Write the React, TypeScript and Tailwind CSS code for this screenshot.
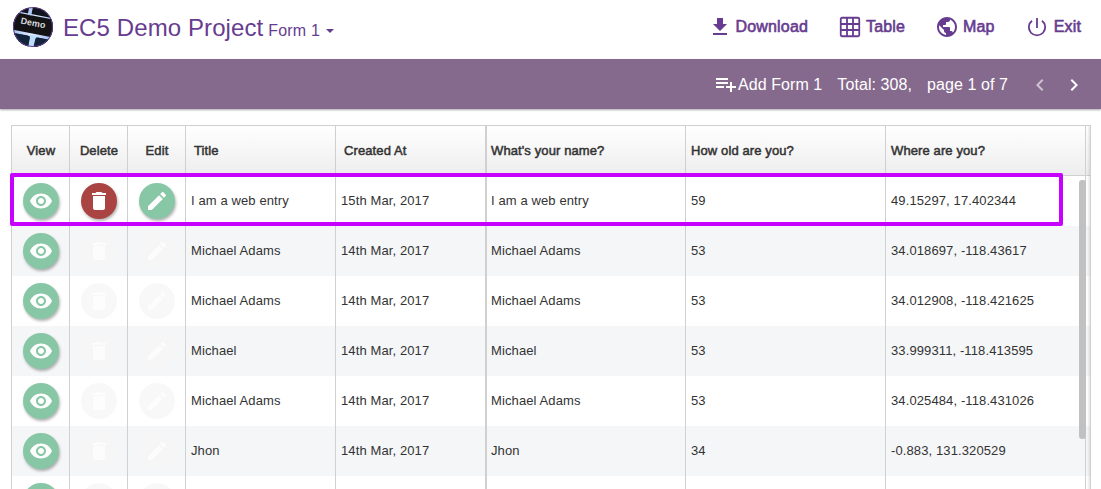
import React from 'react';

const PATHS = {
  download: 'M19 9h-4V3H9v6H5l7 7 7-7zM5 18v2h14v-2H5z',
  globe:
    'M12 2C6.48 2 2 6.48 2 12s4.48 10 10 10 10-4.48 10-10S17.52 2 12 2zm-1 17.93c-3.95-.49-7-3.85-7-7.93 0-.62.08-1.21.21-1.79L9 15v1c0 1.1.9 2 2 2v1.93zm6.9-2.54c-.26-.81-1-1.39-1.9-1.39h-1v-3c0-.55-.45-1-1-1H8v-2h2c.55 0 1-.45 1-1V7h2c1.1 0 2-.9 2-2v-.41c2.93 1.19 5 4.06 5 7.41 0 2.08-.8 3.97-2.1 5.39z',
  add: 'M14 10H2v2h12v-2zm0-4H2v2h12V6zm4 8v-4h-2v4h-4v2h4v4h2v-4h4v-2h-4zM2 16h8v-2H2v2z',
  prev: 'M15.41 7.41L14 6l-6 6 6 6 1.41-1.41L10.83 12z',
  next: 'M10 6L8.59 7.41 13.17 12l-4.58 4.59L10 18l6-6z',
  eye: 'M12 4.5C7 4.5 2.73 7.61 1 12c1.73 4.39 6 7.5 11 7.5s9.27-3.11 11-7.5c-1.73-4.39-6-7.5-11-7.5zM12 17c-2.76 0-5-2.24-5-5s2.24-5 5-5 5 2.24 5 5-2.24 5-5 5zm0-8c-1.66 0-3 1.34-3 3s1.34 3 3 3 3-1.34 3-3-1.34-3-3-3z',
  trash: 'M6 19c0 1.1.9 2 2 2h8c1.1 0 2-.9 2-2V7H6v12zM19 4h-3.5l-1-1h-5l-1 1H5v2h14V4z',
  pencil:
    'M3 17.25V21h3.75L17.81 9.94l-3.75-3.75L3 17.25zM20.71 7.04c.39-.39.39-1.02 0-1.41l-2.34-2.34c-.39-.39-1.02-.39-1.41 0l-1.83 1.83 3.75 3.75 1.83-1.83z',
};

const STROKES = {
  grid: 'M4 2.75h16a1.25 1.25 0 0 1 1.25 1.25v16a1.25 1.25 0 0 1-1.25 1.25H4a1.25 1.25 0 0 1-1.25-1.25V4A1.25 1.25 0 0 1 4 2.75zM9 3v18M15 3v18M3 9h18M3 15h18',
  power: 'M12 3v10M7 5.7a8.2 8.2 0 1 0 10 0',
};

type IconName = keyof typeof PATHS | keyof typeof STROKES;

function Icon({ name, className = 'size-6' }: { name: IconName; className?: string }) {
  return (
    <svg viewBox="0 0 24 24" className={`shrink-0 ${className}`}>
      {name in STROKES ? (
        <path d={STROKES[name as keyof typeof STROKES]} fill="none" stroke="currentColor" strokeWidth="1.8" />
      ) : (
        <path d={PATHS[name as keyof typeof PATHS]} fill="currentColor" />
      )}
    </svg>
  );
}

function Logo() {
  return (
    <div className="relative size-10 overflow-hidden rounded-full">
      <svg viewBox="0 0 40 40" className="size-10">
        <defs>
          <linearGradient id="glow" x1="0" y1="0" x2="1" y2="0">
            <stop offset="0" stopColor="#8fb4f2" />
            <stop offset="0.5" stopColor="#e2edff" />
            <stop offset="1" stopColor="#86aaf0" />
          </linearGradient>
        </defs>
        <rect width="40" height="40" fill="#10131d" />
        <g transform="rotate(11 20 20)">
          <rect x="-6" y="7.6" width="52" height="22" fill="url(#glow)" />
          <rect x="-2" y="8.8" width="46" height="17.6" rx="2" fill="#131316" />
          <rect x="12.5" y="-4" width="3.6" height="13" fill="#b3caf8" />
          <path d="M18.5 28h7l-1.5 14h-5z" fill="#bcdcfb" />
          <rect x="-6" y="29.4" width="25" height="12" rx="2.5" fill="#14233c" />
          <rect x="24.5" y="29.4" width="25" height="12" rx="2.5" fill="#14233c" />
        </g>
      </svg>
      <span className="absolute inset-x-0 top-[9px] rotate-[11deg] text-center text-[9px] leading-[15px] font-bold text-[#d4d5d9]">
        Demo
      </span>
      <span className="absolute inset-0 rounded-full border border-[#673c90]" />
    </div>
  );
}

const COLUMNS = 'grid grid-cols-[58px_58px_58px_150px_150px_200px_200px_200px_5px]';
const HEADINGS = ['View', 'Delete', 'Edit', 'Title', 'Created At', "What's your name?", 'How old are you?', 'Where are you?'];

const ENTRIES = [
  { name: 'I am a web entry', date: '15th Mar, 2017', age: '59', place: '49.15297, 17.402344', own: true },
  { name: 'Michael Adams', date: '14th Mar, 2017', age: '53', place: '34.018697, -118.43617' },
  { name: 'Michael Adams', date: '14th Mar, 2017', age: '53', place: '34.012908, -118.421625' },
  { name: 'Michael', date: '14th Mar, 2017', age: '53', place: '33.999311, -118.413595' },
  { name: 'Michael Adams', date: '14th Mar, 2017', age: '53', place: '34.025484, -118.431026' },
  { name: 'Jhon', date: '14th Mar, 2017', age: '34', place: '-0.883, 131.320529' },
  { name: '', date: '', age: '', place: '' },
];

function RoundButton({ icon, tone }: { icon: 'eye' | 'trash' | 'pencil'; tone: 'green' | 'red' | 'off' }) {
  const tones = {
    green: 'bg-[#88c7a6] text-white shadow-[1px_2px_3px_rgba(0,0,0,0.3)]',
    red: 'bg-[#a94442] text-white shadow-[1px_2px_3px_rgba(0,0,0,0.3)]',
    off: 'bg-[#f6f6f6]/80 text-white/70',
  };
  return (
    <div className="flex items-center border-r border-[#d0d0d0] pl-[11px]">
      <button className={`flex size-9 items-center justify-center rounded-full ${tones[tone]}`}>
        <Icon name={icon} className="mr-px size-6" />
      </button>
    </div>
  );
}

function Cell({ children, divider = '' }: { children: React.ReactNode; divider?: string }) {
  return <div className={`flex items-center border-r border-[#d0d0d0] ${divider || 'pl-[5px]'}`}>{children}</div>;
}

const NAV = [
  { icon: 'download', label: 'Download', place: 'gap-[4px]' },
  { icon: 'grid', label: 'Table', place: 'ml-[30px] gap-[4px]' },
  { icon: 'globe', label: 'Map', place: 'ml-[30px] gap-[4px]' },
  { icon: 'power', label: 'Exit', place: 'ml-[30px] gap-[5px]' },
] as const;

export default function App() {
  return (
    <div className="flex h-[489px] w-[1101px] flex-col overflow-hidden bg-white font-['Liberation_Sans',Arial,sans-serif] text-[#333]">
      <header className="flex h-[59px] shrink-0 items-start justify-between pr-5 pl-[13px] text-[#673c90]">
        <div className="flex pt-[7px]">
          <Logo />
          <div className="ml-[10px] flex items-baseline">
            <h1 className="text-[24px] leading-[42px] tracking-[0.1px]">EC5 Demo Project</h1>
            <span className="ml-[5px] text-[16px] tracking-[0.01em]">Form 1</span>
            <span className="mt-[9px] mb-[3px] ml-[6px] self-center border-x-4 border-t-4 border-x-transparent border-t-[#673c90]" />
          </div>
        </div>
        <nav className="flex pt-[14px]">
          {NAV.map((item) => (
            <a key={item.label} className={`flex items-center ${item.place}`}>
              <Icon name={item.icon} />
              <span className="pt-px text-[16px] leading-6 tracking-[0.01em] [-webkit-text-stroke:0.6px_currentColor]">
                {item.label}
              </span>
            </a>
          ))}
        </nav>
      </header>

      <div className="flex h-[50px] shrink-0 items-center justify-end bg-[#856a8e] pt-[2px] pr-[15px] text-[16px] tracking-[0.08px] text-white shadow-[0_1px_2px_rgba(0,0,0,0.35)]">
        <Icon name="add" className="mb-[2px] size-6" />
        <span>Add Form 1</span>
        <span className="ml-[15px]">Total: 308,</span>
        <span className="ml-[15px]">page 1 of 7</span>
        <Icon name="prev" className="ml-5 size-6 opacity-60" />
        <Icon name="next" className="ml-[10px] size-6" />
      </div>

      <main className="relative mt-4 ml-[11px] h-[364px] w-[1080px] border-t border-l border-[#d0d0d0] text-[13px] tracking-[0.11px]">
        <div className="h-full overflow-hidden">
          <div className={`${COLUMNS} h-[50px] border-b border-[#d0d0d0] bg-linear-to-b from-white to-[#ededed]`}>
            {HEADINGS.map((heading, i) => (
              <div
                key={heading}
                className={`flex items-center border-r border-[#d0d0d0] [-webkit-text-stroke:0.5px_currentColor] ${
                  i < 3 ? 'justify-center pl-px' : i < 5 ? 'pl-2' : i === 5 ? 'border-l pl-1' : 'pl-[5px]'
                }`}
              >
                {heading}
              </div>
            ))}
          </div>
          {ENTRIES.map((entry, i) => (
            <div key={i} className={`${COLUMNS} h-[50px] ${i % 2 ? 'bg-[#f5f6f8]' : 'bg-white'}`}>
              <RoundButton icon="eye" tone="green" />
              <RoundButton icon="trash" tone={entry.own ? 'red' : 'off'} />
              <RoundButton icon="pencil" tone={entry.own ? 'green' : 'off'} />
              <Cell>{entry.name}</Cell>
              <Cell>{entry.date}</Cell>
              <Cell divider="border-l pl-1">{entry.name}</Cell>
              <Cell>{entry.age}</Cell>
              <Cell>{entry.place}</Cell>
            </div>
          ))}
        </div>
        <div className="absolute top-0 right-0 h-full w-[4px] border-r border-[#d0d0d0] bg-linear-to-r from-black/0 to-black/10" />
        <div className="absolute top-[54px] right-[5px] h-[259px] w-[7px] rounded-[3px] bg-[#c1c1c1]" />
        <div className="absolute top-[47px] -left-[2px] h-[53px] w-[1053px] rounded-[2px] border-4 border-[#c800ff]" />
      </main>
    </div>
  );
}
